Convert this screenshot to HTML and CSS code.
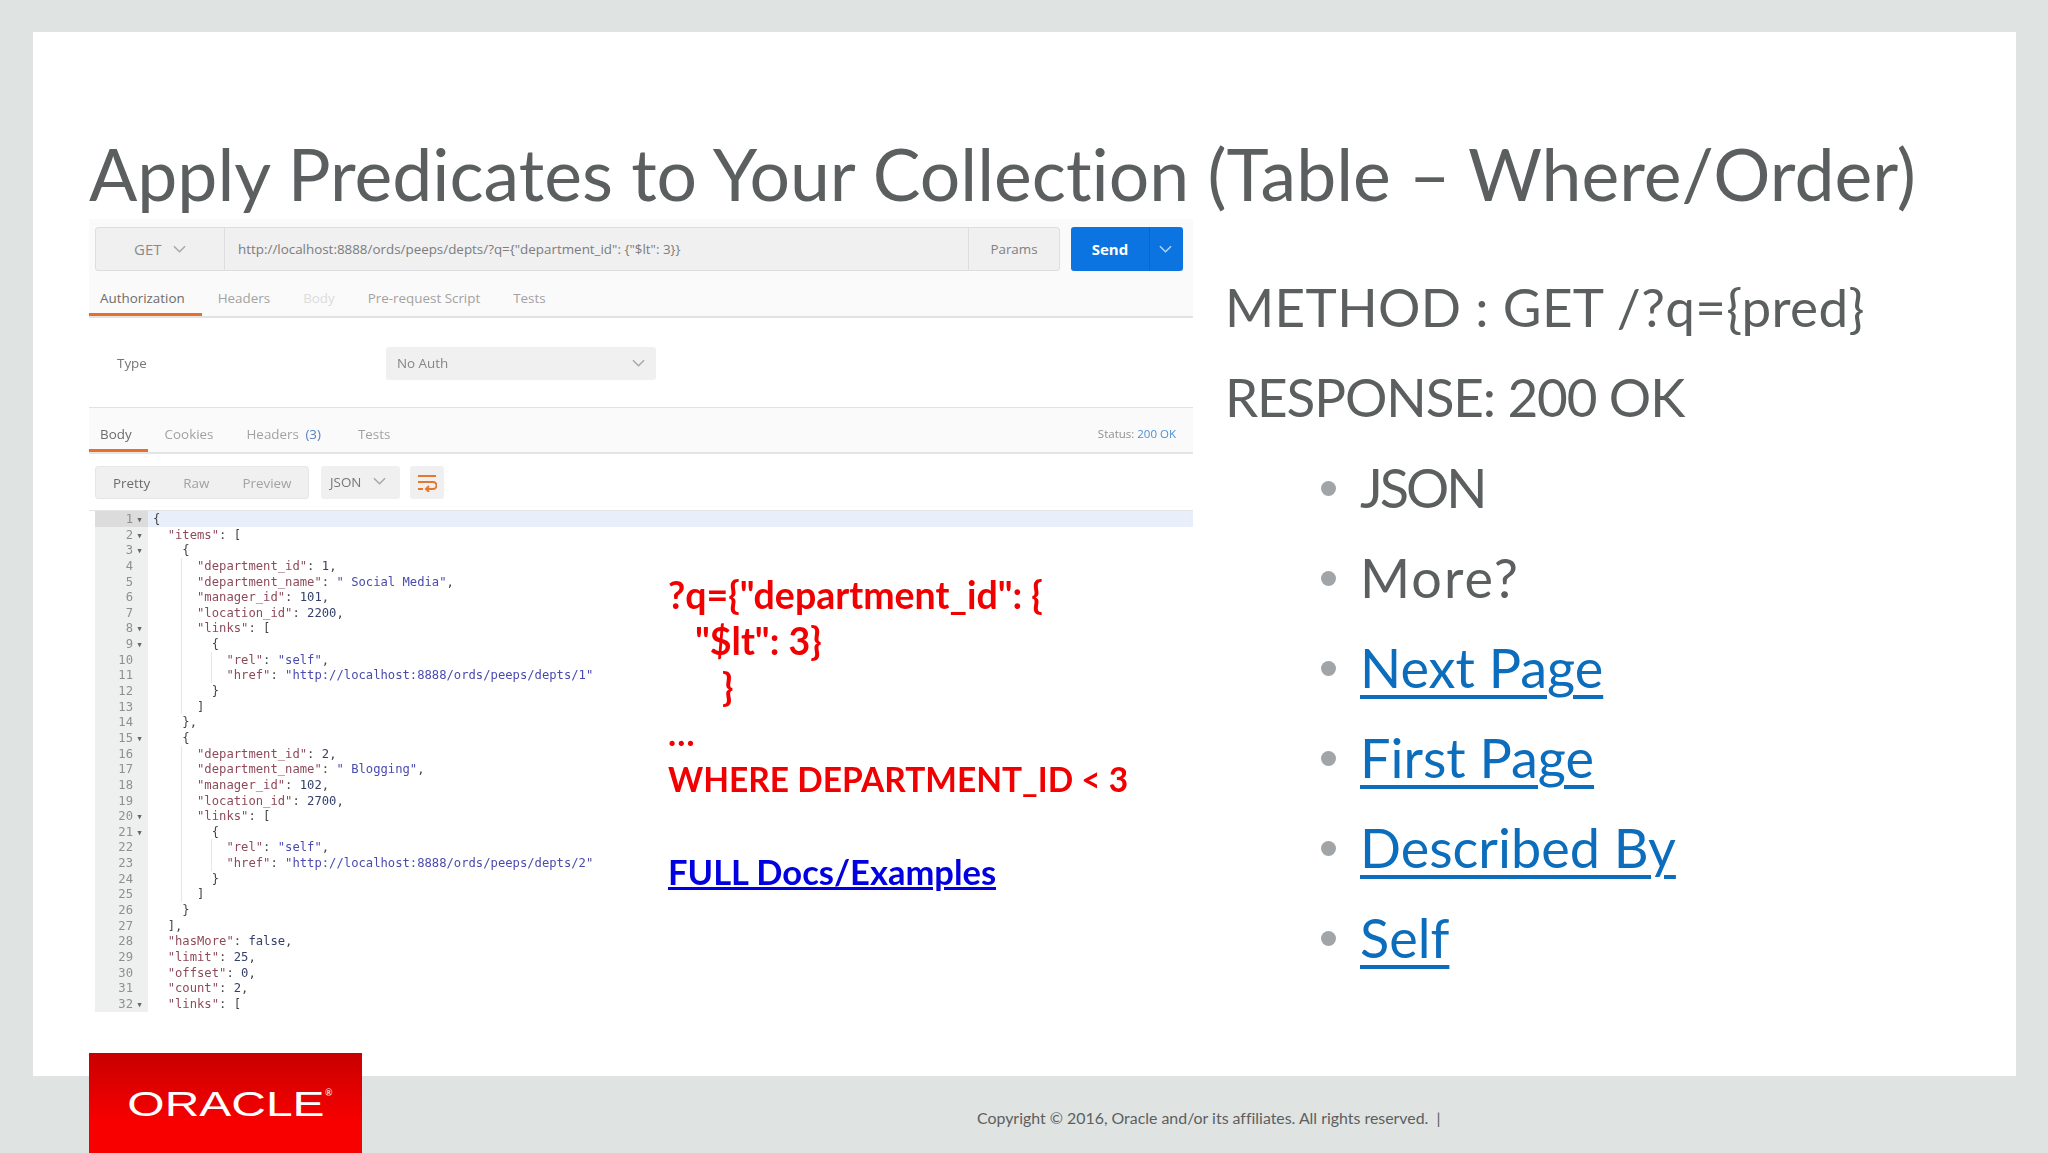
FILE: index.html
```html
<!DOCTYPE html>
<html lang="en">
<head>
<meta charset="UTF-8">
<title>Apply Predicates to Your Collection</title>
<link rel="stylesheet" href="styles.css">
</head>
<body>

<div class="slide">
    <h1 class="title">Apply Predicates to Your Collection (Table – Where/Order)</h1>

    <div class="content">
        <div class="left">
            <div class="shot">
                <div class="req-area">
                    <div class="req-bar">
                        <div class="url-box">
                            <div class="method">GET <svg class="chev" viewBox="0 0 14 8"><path d="M1 1l6 6 6-6"/></svg></div>
                            <div class="url">http://localhost:8888/ords/peeps/depts/?q={"department_id": {"$lt": 3}}</div>
                            <div class="params">Params</div>
                        </div>
                        <div class="send">
                            <span class="send-label">Send</span>
                            <span class="send-arrow"><svg class="chev" viewBox="0 0 14 8"><path d="M1 1l6 6 6-6"/></svg></span>
                        </div>
                    </div>
                    <div class="tabs">
                        <span class="tab active tab-auth">Authorization</span>
                        <span class="tab">Headers</span>
                        <span class="tab faded">Body</span>
                        <span class="tab">Pre-request Script</span>
                        <span class="tab">Tests</span>
                    </div>
                </div>

                <div class="auth-row">
                    <span class="type-label">Type</span>
                    <div class="auth-select">No Auth <svg class="chev" viewBox="0 0 14 8"><path d="M1 1l6 6 6-6"/></svg></div>
                </div>

                <div class="res-tabs">
                    <div class="tabs">
                        <span class="tab active tab-body">Body</span>
                        <span class="tab">Cookies</span>
                        <span class="tab">Headers <b class="count">(3)</b></span>
                        <span class="tab">Tests</span>
                    </div>
                    <div class="status">Status: <b>200 OK</b></div>
                </div>

                <div class="toolbar">
                    <div class="views">
                        <span class="view on">Pretty</span>
                        <span class="view">Raw</span>
                        <span class="view">Preview</span>
                    </div>
                    <div class="format">JSON <svg class="chev" viewBox="0 0 14 8"><path d="M1 1l6 6 6-6"/></svg></div>
                    <div class="wrap-btn">
                        <svg viewBox="0 0 20 18"><path d="M1 2h18M1 8h15a3 3 0 0 1 0 7h-7M12 12l-3 3 3 3M1 15h5"/></svg>
                    </div>
                </div>

                <div class="editor">
                    <div class="gutter" id="gutter"></div>
                    <pre class="code" id="code"></pre>
                </div>
            </div>

            <div class="note">
                <div class="note-q">?q={"department_id": {</div>
                <div class="note-q ind1">"$lt": 3}</div>
                <div class="note-q ind2">}</div>
                <div>…</div>
                <div class="note-where">WHERE DEPARTMENT_ID &lt; 3</div>
                <div>&nbsp;</div>
                <div><a class="doc-link" href="#">FULL Docs/Examples</a></div>
            </div>
        </div>

        <div class="right">
            <p class="line line-method">METHOD : GET /?q={pred}</p>
            <p class="line line-response">RESPONSE: 200 OK</p>
            <ul class="bullets">
                <li class="item-json">JSON</li>
                <li class="item-more">More?</li>
                <li><a href="#">Next Page</a></li>
                <li><a href="#">First Page</a></li>
                <li><a href="#">Described By</a></li>
                <li><a href="#">Self</a></li>
            </ul>
        </div>
    </div>
</div>

<div class="footer">
    <div class="logo"><span class="logo-text">ORACLE</span><span class="logo-reg">®</span></div>
    <div class="copyright">Copyright © 2016, Oracle and/or its affiliates. All rights reserved.  |</div>
</div>

<script>
// json response shown in the postman editor
var lines = [
    '{',
    '  <k>"items"</k>: [',
    '    {',
    '      <k>"department_id"</k>: <n>1</n>,',
    '      <k>"department_name"</k>: <s>" Social Media"</s>,',
    '      <k>"manager_id"</k>: <n>101</n>,',
    '      <k>"location_id"</k>: <n>2200</n>,',
    '      <k>"links"</k>: [',
    '        {',
    '          <k>"rel"</k>: <s>"self"</s>,',
    '          <k>"href"</k>: <s>"http://localhost:8888/ords/peeps/depts/1"</s>',
    '        }',
    '      ]',
    '    },',
    '    {',
    '      <k>"department_id"</k>: <n>2</n>,',
    '      <k>"department_name"</k>: <s>" Blogging"</s>,',
    '      <k>"manager_id"</k>: <n>102</n>,',
    '      <k>"location_id"</k>: <n>2700</n>,',
    '      <k>"links"</k>: [',
    '        {',
    '          <k>"rel"</k>: <s>"self"</s>,',
    '          <k>"href"</k>: <s>"http://localhost:8888/ords/peeps/depts/2"</s>',
    '        }',
    '      ]',
    '    }',
    '  ],',
    '  <k>"hasMore"</k>: <n>false</n>,',
    '  <k>"limit"</k>: <n>25</n>,',
    '  <k>"offset"</k>: <n>0</n>,',
    '  <k>"count"</k>: <n>2</n>,',
    '  <k>"links"</k>: ['
];
var foldable = [1, 2, 3, 8, 9, 15, 20, 21, 32];
var gutter = document.getElementById("gutter");
var code = document.getElementById("code");

for (var i = 0; i < lines.length; i++) {
    var n = i + 1;
    var num = document.createElement("div");
    num.className = "num" + (n === 1 ? " num-active" : "");
    num.innerHTML = "<span>" + n + "</span><i class=\"fold\">" + (foldable.indexOf(n) >= 0 ? "▾" : "") + "</i>";
    gutter.appendChild(num);

    var row = document.createElement("div");
    row.className = "row" + (n === 1 ? " row-active" : "");
    // indent guides inside the two objects
    if ((n >= 4 && n <= 13) || (n >= 16 && n <= 25)) row.className += " guide";
    if (n === 10 || n === 11 || n === 22 || n === 23) row.className += " guide-deep";
    row.innerHTML = lines[i];
    code.appendChild(row);
}
</script>

</body>
</html>
```

FILE: styles.css
```css
html, body {
    margin: 0;
    height: 1153px;
    overflow: hidden;
}
body {
    background-color: #dfe3e2;
    font-family: "Lato", sans-serif;
    font-variant-ligatures: none;
    color: #5c5f60;
}
.slide {
    background-color: #fff;
    height: 1044px;
    margin: 32px 32px 0 33px;
    padding: 0 0 0 56px;
    box-sizing: border-box;
}
.title {
    margin: 0;
    padding-top: 100px;
    height: 187px;
    box-sizing: border-box;
    font-size: 71.5px;
    font-weight: 400;
    line-height: 82px;
    white-space: nowrap;
    color: #5c5f60;
}
.content {
    display: flex;
}
.left {
    position: relative;
    width: 1136px;
    flex: none;
}

/* postman screenshot */
.shot {
    width: 1104px;
    font-family: "Open Sans", sans-serif;
    font-size: 13.4px;
    color: #8a8a8a;
    filter: blur(0.45px);
}
.req-area {
    background-color: #fafafa;
    height: 99px;
    box-sizing: border-box;
    padding-top: 8px;
    border-bottom: 2px solid #e2e2e2;
}
.req-bar {
    display: flex;
    padding-left: 6px;
    height: 44px;
}
.url-box {
    display: flex;
    width: 965px;
    background-color: #f0f0f0;
    border: 1px solid #dedede;
    border-radius: 3px;
    box-sizing: border-box;
    align-items: center;
}
.method {
    width: 129px;
    box-sizing: border-box;
    padding-left: 38px;
    font-size: 15px;
    line-height: 42px;
    border-right: 1px solid #dedede;
}
.chev {
    width: 13px;
    height: 8px;
    margin-left: 8px;
    vertical-align: 2px;
    fill: none;
    stroke: #a8a8a8;
    stroke-width: 1.6;
}
.url {
    flex: 1;
    padding-left: 13px;
    color: #7c7c7c;
    white-space: nowrap;
}
.params {
    width: 90px;
    text-align: center;
    line-height: 42px;
    border-left: 1px solid #dedede;
    color: #808080;
}
.send {
    display: flex;
    margin-left: 11px;
    width: 112px;
    background-color: #0b74e0;
    border-radius: 3px;
    color: #fff;
    line-height: 44px;
    font-size: 15px;
    font-weight: 700;
}
.send-label {
    width: 79px;
    box-sizing: border-box;
    text-align: center;
    border-right: 1px solid #0a66c6;
}
.send-arrow {
    flex: 1;
}
.send-arrow .chev {
    stroke: #b5d4f5;
    margin-left: 9px;
}
.tabs {
    display: flex;
    height: 45px;
    box-sizing: border-box;
    align-items: center;
    padding: 8px 0 0 11px;
    gap: 33px;
}
.tab {
    color: #a2a2a2;
    position: relative;
}
.tab.faded {
    color: #dcdcdc;
}
.tab.active {
    color: #6c6c6c;
}
.tab.active::after {
    content: "";
    position: absolute;
    left: -11px;
    bottom: -9px;
    height: 3px;
    background-color: #e86f2b;
}
.tab-auth::after {
    width: 113px;
}
.tab-body::after {
    width: 59px;
}
.auth-row {
    display: flex;
    align-items: center;
    height: 90px;
    box-sizing: border-box;
    border-bottom: 1px solid #e2e2e2;
    padding: 1px 0 0 28px;
}
.type-label {
    width: 269px;
    color: #777;
}
.auth-select {
    display: flex;
    width: 270px;
    height: 33px;
    align-items: center;
    justify-content: space-between;
    box-sizing: border-box;
    padding: 0 11px;
    background-color: #f0f0f0;
    border-radius: 3px;
    color: #858585;
}
.res-tabs {
    display: flex;
    justify-content: space-between;
    align-items: center;
    height: 46px;
    box-sizing: border-box;
    background-color: #fafafa;
    border-bottom: 2px solid #e4e4e4;
    padding-right: 17px;
}
.count {
    margin-left: 3px;
    margin-right: 4px;
    font-weight: 400;
    color: #5a80c0;
}
.status {
    padding-top: 7px;
    font-size: 11.5px;
    color: #909090;
}
.status b {
    font-weight: 400;
    color: #4a90d8;
}
.toolbar {
    display: flex;
    height: 56px;
    box-sizing: border-box;
    padding: 12px 0 11px 6px;
    gap: 12px;
}
.views {
    display: flex;
    width: 214px;
    box-sizing: border-box;
    padding-left: 17px;
    gap: 33px;
    align-items: center;
    background-color: #f0f0f0;
    border: 1px solid #e6e6e6;
    border-radius: 3px;
    color: #a2a2a2;
}
.view.on {
    color: #6c6c6c;
}
.format {
    width: 79px;
    box-sizing: border-box;
    padding-left: 9px;
    background-color: #f0f0f0;
    border-radius: 3px;
    line-height: 33px;
    color: #777;
}
.wrap-btn {
    display: flex;
    width: 34px;
    align-items: center;
    justify-content: center;
    margin-left: -2px;
    background-color: #f0f0f0;
    border-radius: 3px;
}
.wrap-btn svg {
    width: 20px;
    height: 18px;
    fill: none;
    stroke: #e8772e;
    stroke-width: 2;
}
.editor {
    display: flex;
    border-top: 1px solid #e4e4e4;
    font-family: "DejaVu Sans Mono", monospace;
    font-size: 12.2px;
    line-height: 17px;
}
.gutter {
    width: 53px;
    margin-left: 6px;
    flex: none;
    background-color: #eef0f0;
    color: #8f8f8f;
}
.num {
    display: flex;
    justify-content: flex-end;
    padding-right: 2px;
    height: 15.65px;
}
.num-active {
    background-color: #dcdcdc;
}
.fold {
    width: 13px;
    text-align: center;
    font-style: normal;
    font-size: 11px;
    color: #666;
}
.code {
    flex: 1;
    margin: 0;
    font: inherit;
    color: #444;
}
.row {
    height: 15.65px;
    white-space: pre;
    padding-left: 5px;
}
.row-active {
    background-color: #e8eefa;
}
.guide {
    background: linear-gradient(#e6e6e6, #e6e6e6) no-repeat 33px 0 / 1px 100%;
}
.guide-deep {
    background:
        linear-gradient(#e6e6e6, #e6e6e6) no-repeat 33px 0 / 1px 100%,
        linear-gradient(#e6e6e6, #e6e6e6) no-repeat 63px 0 / 1px 100%;
}
k {
    color: #8f4a5a;
}
s {
    text-decoration: none;
    color: #4a4ab0;
}
n {
    color: #34406a;
}

/* red note on top of the screenshot */
.note {
    position: absolute;
    left: 579px;
    top: 353px;
    font-size: 34.5px;
    line-height: 46.1px;
    font-weight: 700;
    color: #f00000;
    white-space: nowrap;
}
.note-q {
    font-size: 37.5px;
}
.note-where {
    font-size: 33.5px;
}
.ind1 {
    padding-left: 27px;
}
.ind2 {
    padding-left: 54px;
}
.doc-link {
    color: #0000e0;
}

/* right column */
.right {
    padding-top: 43px;
}
.line {
    margin: 0;
    font-size: 53px;
    line-height: 90px;
    white-space: nowrap;
}
.line-method {
    letter-spacing: 0.35px;
}
.line-response {
    letter-spacing: -1.1px;
}
.bullets {
    list-style: none;
    margin: 0;
    padding: 1px 0 0 135px;
    font-size: 54px;
    line-height: 90px;
}
.bullets li {
    position: relative;
}
.bullets li::before {
    content: "";
    position: absolute;
    left: -39px;
    top: 38px;
    width: 15px;
    height: 15px;
    border-radius: 50%;
    background-color: #a2a5a8;
}
.item-json {
    letter-spacing: -3px;
}
.item-more {
    letter-spacing: 2px;
}
.bullets a {
    color: #0b6dbb;
    text-decoration-thickness: 3.5px;
    text-underline-offset: 7px;
}

/* footer */
.footer {
    display: flex;
    height: 77px;
    padding-left: 89px;
}
.logo {
    display: flex;
    align-items: center;
    justify-content: center;
    width: 273px;
    height: 100px;
    margin-top: -23px;
    position: relative;
    background: linear-gradient(#c90000, #f80000 70%);
    color: #fff;
}
.logo-text {
    display: block;
    font-family: "Liberation Sans", sans-serif;
    font-size: 35px;
    line-height: 35px;
    transform: scaleX(1.37);
}
.logo-reg {
    position: absolute;
    left: 236px;
    top: 34px;
    font-size: 9px;
}
.copyright {
    margin-left: 615px;
    padding-top: 32px;
    font-size: 15.9px;
    white-space: pre;
    color: #5c5f60;
}
```
